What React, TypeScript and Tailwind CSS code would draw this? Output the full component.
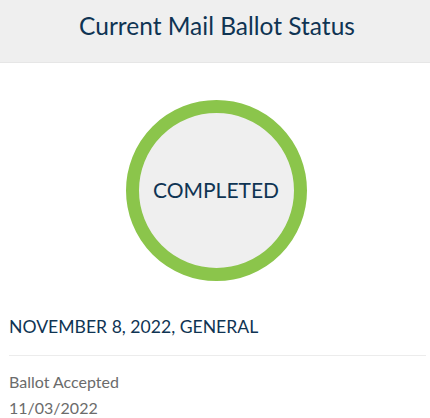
import React from "react";

export default function App() {
  return (
    <div className="w-[430px] h-[418px] bg-white overflow-hidden" style={{ fontFamily: "Lato, 'Open Sans', sans-serif" }}>
      <div className="h-[63px] bg-[#efefef] border-b border-[#e6e6e6] flex items-center justify-center">
        <h1 className="text-[24.5px] leading-none text-[#0f3453] font-normal -mt-[9px] pl-[4px]">Current Mail Ballot Status</h1>
      </div>
      <div className="flex justify-center pt-[37px] pl-[2px]">
        <div className="w-[181px] h-[181px] rounded-full border-[13px] border-[#8bc54b] bg-[#efefef] flex items-center justify-center">
          <span className="text-[21px] leading-none text-[#0f3453] -mt-[2px]">COMPLETED</span>
        </div>
      </div>
      <div className="pl-[9px] pr-[4px] pt-[37px]">
        <div className="text-[17.6px] leading-none text-[#0f3453] pb-[19px] border-b border-[#ececec]">NOVEMBER 8, 2022, GENERAL</div>
        <div className="pt-[13px] text-[16px] leading-[26px] text-[#6b6b6b]">
          <div>Ballot Accepted</div>
          <div>11/03/2022</div>
        </div>
      </div>
    </div>
  );
}
